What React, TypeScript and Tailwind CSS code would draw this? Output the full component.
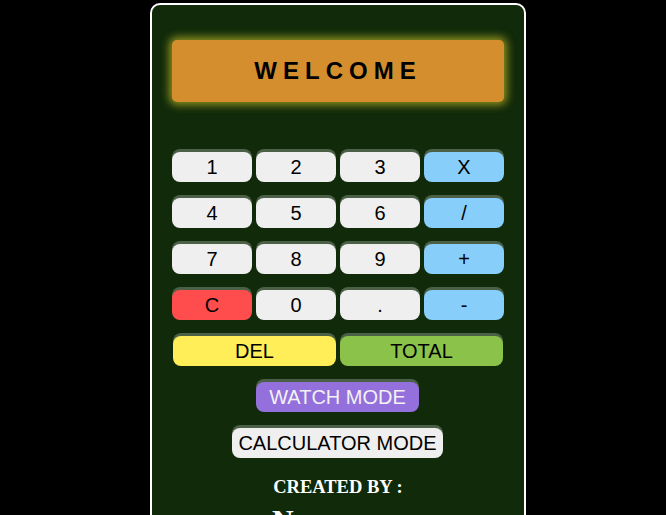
export default function App() {
  const keys: { label: string; cls: string }[] = [
    { label: "1", cls: "bg-[#efefef]" },
    { label: "2", cls: "bg-[#efefef]" },
    { label: "3", cls: "bg-[#efefef]" },
    { label: "X", cls: "bg-[#87cefa]" },
    { label: "4", cls: "bg-[#efefef]" },
    { label: "5", cls: "bg-[#efefef]" },
    { label: "6", cls: "bg-[#efefef]" },
    { label: "/", cls: "bg-[#87cefa]" },
    { label: "7", cls: "bg-[#efefef]" },
    { label: "8", cls: "bg-[#efefef]" },
    { label: "9", cls: "bg-[#efefef]" },
    { label: "+", cls: "bg-[#87cefa]" },
    { label: "C", cls: "bg-[#ff4d4d]" },
    { label: "0", cls: "bg-[#efefef]" },
    { label: ".", cls: "bg-[#efefef]" },
    { label: "-", cls: "bg-[#87cefa]" },
  ];

  const btn =
    "h-[30px] rounded-[8px] text-[20px] shadow-[0_-3px_0_rgba(255,255,255,0.25)] font-['Liberation_Sans',Arial,sans-serif]";

  return (
    <div className="min-h-[515px] h-[515px] overflow-hidden bg-black pt-[3px]">
      <div className="ml-[150px] w-[376px] h-[600px] rounded-[10px] border-2 border-white bg-[#102a0a] px-5 pt-[35px]">
        {/* Welcome banner */}
        <div className="h-[62px] rounded-[5px] bg-[#d48e2e] shadow-[0_0_8px_3px_rgba(200,190,40,0.7)] flex items-center justify-center">
          <span className="font-['Liberation_Sans',Arial,sans-serif] font-bold text-[24px] tracking-[6px] text-black">
            WELCOME
          </span>
        </div>

        {/* Keypad */}
        <div className="mt-[50px] grid grid-cols-4 gap-x-1 gap-y-4">
          {keys.map((k) => (
            <button key={k.label} className={`${btn} text-black ${k.cls}`}>
              {k.label}
            </button>
          ))}
          <button className={`${btn} text-black col-span-2 bg-[#ffee58] ml-px`}>DEL</button>
          <button className={`${btn} text-black col-span-2 bg-[#8bc34a] mr-px`}>TOTAL</button>
        </div>

        {/* Modes */}
        <div className="mt-4 flex flex-col items-center gap-4">
          <button className={`${btn} w-[163px] -ml-px bg-[#9370db] text-[#f2f2f2]`}>WATCH MODE</button>
          <button className={`${btn} px-[6px] -ml-px bg-[#efefef] text-black`}>CALCULATOR MODE</button>
        </div>

        {/* Footer */}
        <div className="mt-[18px] flex flex-col text-white font-['Liberation_Serif','Times_New_Roman',serif]">
          <p className="self-center font-bold text-[18.5px] leading-[22px]">CREATED BY :</p>
          <p className="ml-[100px] mt-1 font-bold text-[30px] leading-[36px]">Name</p>
        </div>
      </div>
    </div>
  );
}
